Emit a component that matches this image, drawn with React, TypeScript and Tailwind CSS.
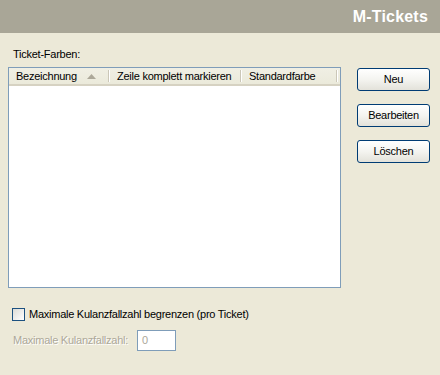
import React from "react"

const font = { fontFamily: '"Liberation Sans", Arial, sans-serif', letterSpacing: "-0.25px" }

function XpButton({ label }: { label: string }) {
  return (
    <button className="h-[23px] w-[73px] rounded-[3px] border border-[#003c74] bg-gradient-to-b from-white via-[#f4f4f0] to-[#e3e2da] text-[11px] text-black">
      {label}
    </button>
  )
}

function HeaderCell({ label, width, sorted }: { label: string; width: number; sorted?: boolean }) {
  return (
    <div className="flex h-full shrink-0 items-center justify-between pl-[7px]" style={{ width }}>
      <span>{label}</span>
      <div className="flex items-center">
        {sorted && (
          <svg width="9" height="5" viewBox="0 0 9 5" className="mr-[12px]">
            <polygon points="4.5,0 9,5 0,5" fill="#aca899" />
          </svg>
        )}
        <div className="h-[12px] w-[2px] border-l border-r border-l-[#cbc7b8] border-r-white" />
      </div>
    </div>
  )
}

export default function App() {
  return (
    <div className="h-[375px] w-[440px] bg-[#ece9d8] text-[11px] text-black" style={font}>
      <div className="flex h-[33px] items-center justify-end bg-[#a9a697] pr-[12px]">
        <span className="text-[16px] font-bold tracking-[0.2px] text-white">M-Tickets</span>
      </div>

      <div className="flex pl-[8px] pt-[15px]">
        <div className="flex flex-col">
          <div className="pl-[5px] leading-[13px]">Ticket-Farben:</div>
          <div className="mt-[6px] h-[221px] w-[333px] border border-[#7f9db9] bg-white">
            <div className="flex h-[18px] border-b-2 border-b-[#d6d2c2] bg-gradient-to-b from-[#f0efe4] to-[#ebeadb]">
              <HeaderCell label="Bezeichnung" width={101} sorted />
              <HeaderCell label="Zeile komplett markieren" width={132} />
              <HeaderCell label="Standardfarbe" width={96} />
            </div>
          </div>
        </div>
        <div className="ml-[16px] mt-[20px] flex flex-col gap-[13px]">
          <XpButton label="Neu" />
          <XpButton label="Bearbeiten" />
          <XpButton label="Löschen" />
        </div>
      </div>

      <div className="mt-[18px] flex items-center pl-[12px]">
        <div className="h-[13px] w-[13px] border border-[#1c5180] bg-gradient-to-br from-[#dcdcd7] to-white" />
        <span className="ml-[4px]">Maximale Kulanzfallzahl begrenzen (pro Ticket)</span>
      </div>

      <div className="mt-[7px] flex items-center pl-[13px]">
        <span className="text-[#aca899] [text-shadow:1px_1px_0_#fff]">Maximale Kulanzfallzahl:</span>
        <div className="ml-[9px] flex h-[21px] w-[39px] items-center border border-[#7f9db9] bg-white pl-[4px] text-[#aca899]">
          0
        </div>
      </div>
    </div>
  )
}
